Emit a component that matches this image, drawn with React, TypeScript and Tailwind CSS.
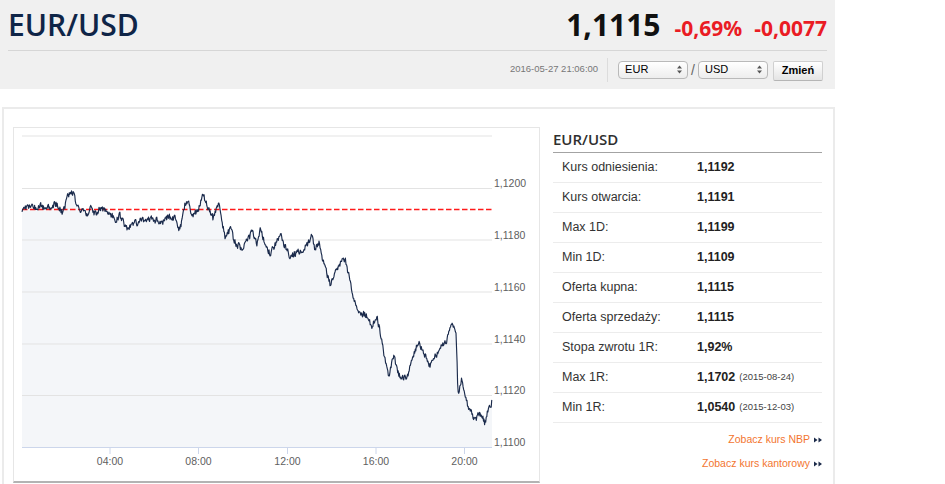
import * as React from "react";

type Pt = [number, number];

// rough shape of the intraday move, page coordinates
const controls: Pt[] = [
  [22, 208], [27, 205], [33, 207], [40, 204], [45, 208], [50, 206], [57, 203], [62, 211],
  [65, 207], [67, 191], [70, 193], [73, 190], [78, 207], [83, 210], [87, 214], [90, 206],
  [95, 212], [100, 208], [105, 208], [110, 212], [115, 219], [120, 215], [127, 227], [133, 224],
  [140, 220], [147, 220], [153, 218], [162, 222], [168, 215], [175, 218], [180, 229], [185, 203],
  [188, 201], [193, 215], [198, 209], [203, 194], [208, 206], [213, 217], [219, 204], [222, 219],
  [225, 238], [230, 228], [235, 241], [243, 249], [252, 231], [257, 242], [260, 229], [270, 254],
  [280, 234], [290, 255], [297, 251], [303, 250], [312, 235], [315, 249], [319, 240], [323, 261],
  [330, 282], [337, 266], [345, 258], [348, 270], [352, 290], [357, 306], [362, 312], [367, 314],
  [372, 326], [377, 314], [380, 332], [384, 352], [389, 376], [393, 354], [400, 376], [407, 378],
  [410, 363], [418, 342], [423, 348], [430, 366], [438, 350], [447, 338], [452, 324], [456, 331],
  [458, 392], [462, 377], [467, 402], [470, 407], [475, 419], [480, 413], [485, 422], [488, 410],
  [492, 401],
];

const interp = (x: number) => {
  for (let i = 1; i < controls.length; i++) {
    const [x0, y0] = controls[i - 1];
    const [x1, y1] = controls[i];
    if (x <= x1) return y0 + ((x - x0) / (x1 - x0)) * (y1 - y0);
  }
  return controls[controls.length - 1][1];
};

const buildSeries = () => {
  let seed = 1234567;
  const rnd = () => {
    seed = (seed * 1103515245 + 12345) % 2147483648;
    return seed / 2147483648;
  };
  const pts: Pt[] = [];
  let n = 0;
  for (let x = 22; x <= 492; x += 0.55) {
    n = 0.3 * n + (rnd() - 0.5) * 6.5;
    pts.push([x, Math.min(445, interp(x) + n)]);
  }
  pts.push([492, 399]);
  return pts;
};

const series = buildSeries();
const linePath = series.map(([x, y], i) => `${i ? "L" : "M"}${x.toFixed(1)},${y.toFixed(1)}`).join(" ");
const areaPath = `M22,446 ${series.map(([x, y]) => `L${x.toFixed(1)},${y.toFixed(1)}`).join(" ")} L492,446 Z`;

const gridLines = [
  { y: 135, label: "" },
  { y: 187.5, label: "1,1200" },
  { y: 239, label: "1,1180" },
  { y: 291, label: "1,1160" },
  { y: 343, label: "1,1140" },
  { y: 394.5, label: "1,1120" },
  { y: 446, label: "1,1100" },
];

const hours = [
  { x: 110, label: "04:00" },
  { x: 198.5, label: "08:00" },
  { x: 287.5, label: "12:00" },
  { x: 376, label: "16:00" },
  { x: 464.5, label: "20:00" },
];

const rows = [
  { label: "Kurs odniesienia:", value: "1,1192" },
  { label: "Kurs otwarcia:", value: "1,1191" },
  { label: "Max 1D:", value: "1,1199" },
  { label: "Min 1D:", value: "1,1109" },
  { label: "Oferta kupna:", value: "1,1115" },
  { label: "Oferta sprzedaży:", value: "1,1115" },
  { label: "Stopa zwrotu 1R:", value: "1,92%" },
  { label: "Max 1R:", value: "1,1702", date: "(2015-08-24)" },
  { label: "Min 1R:", value: "1,0540", date: "(2015-12-03)" },
];

const SelectBox = ({ value }: { value: string }) => (
  <div className="w-[70px] h-[18px] rounded-[4px] border border-[#b9b9b9] bg-linear-to-b from-white to-[#ededed] flex items-center justify-between pl-[6px] pr-[5px] text-[11px] text-black leading-none">
    <span>{value}</span>
    <svg width="5" height="9" viewBox="0 0 5 9">
      <polygon points="0,3.5 2.5,0.5 5,3.5" fill="#555" />
      <polygon points="0,5.5 2.5,8.5 5,5.5" fill="#555" />
    </svg>
  </div>
);

const DoubleArrow = () => (
  <svg width="8" height="6" viewBox="0 0 8 6">
    <polygon points="0,0.5 3.5,3 0,5.5" fill="#1c2b4a" />
    <polygon points="4.5,0.5 8,3 4.5,5.5" fill="#1c2b4a" />
  </svg>
);

const Chart = () => (
  <svg width="525" height="353" viewBox="14 127 525 353" className="block">
    <path d={areaPath} fill="#f4f6f9" />
    {gridLines.slice(0, 6).map((g) => (
      <line key={g.y} x1="22" x2="492" y1={g.y} y2={g.y} stroke="#e3e3e3" strokeWidth="1" />
    ))}
    <line x1="22" x2="492" y1="446.5" y2="446.5" stroke="#ccd6eb" strokeWidth="1" />
    {hours.map((h) => (
      <g key={h.label}>
        <line x1={h.x} x2={h.x} y1="446" y2="453" stroke="#ccd6eb" strokeWidth="1" />
        <text x={h.x} y="463.5" textAnchor="middle" fontFamily="'Liberation Sans', Arial, sans-serif" fontSize="10.5" fill="#606060">
          {h.label}
        </text>
      </g>
    ))}
    {gridLines
      .filter((g) => g.label)
      .map((g) => (
        <text key={g.label} x="494" y={g.y - 1.5} fontFamily="'Liberation Sans', Arial, sans-serif" fontSize="10.5" fill="#606060">
          {g.label}
        </text>
      ))}
    <line x1="22" x2="492" y1="208.5" y2="208.5" stroke="#ff1a1a" strokeWidth="1.3" strokeDasharray="5.5 2.5" />
    <path d={linePath} fill="none" stroke="#1b2b4c" strokeWidth="1.15" strokeLinejoin="round" />
  </svg>
);

export default function App() {
  return (
    <div className="w-[945px] h-[484px] overflow-hidden bg-white font-['Liberation_Sans',Arial,sans-serif] text-[#333]">
      <div className="w-[835px] h-[89px] bg-[#f0f0f0] px-2">
        <div className="h-[51px] flex items-center justify-between border-b border-[#d6d6d6]">
          <h1 className="font-['Open_Sans',sans-serif] font-semibold text-[30px] leading-none text-[#0f2547]">EUR/USD</h1>
          <div className="flex items-baseline font-['Open_Sans',sans-serif] leading-none">
            <span className="font-bold text-[30px] text-[#111]">1,1115</span>
            <span className="ml-[14px] font-bold text-[21px] text-[#ea1c24]">-0,69%</span>
            <span className="ml-[12px] font-bold text-[21px] text-[#ea1c24]">-0,0077</span>
          </div>
        </div>
        <div className="h-[37px] flex items-center justify-end pr-[4px]">
          <span className="text-[9.5px] text-[#777]">2016-05-27 21:06:00</span>
          <div className="ml-[9px] mr-[10px] w-px h-[24px] bg-[#dcdcdc]" />
          <SelectBox value="EUR" />
          <span className="mx-[3px] text-[14px] leading-none text-[#666]">/</span>
          <SelectBox value="USD" />
          <button className="ml-[5px] w-[50px] h-[20px] mt-[2px] rounded-[2px] border border-[#d0d0d0] border-b-[#b5b5b5] bg-linear-to-b from-white to-[#e4e4e4] text-[11px] font-bold text-black leading-none">
            Zmień
          </button>
        </div>
      </div>

      <div className="ml-[2px] mt-[18px] w-[833px] h-[400px] border-2 border-[#ebebeb] flex items-start pl-[9px] pt-[18px]">
        <div className="w-[527px] h-[356px] border border-[#e6e6e6] border-b-2 border-b-[#b3b3b3] bg-white">
          <Chart />
        </div>

        <div className="ml-[13px] w-[269px] flex flex-col">
          <div className="h-[26px] flex items-center border-b border-[#a3a3a3] font-['Open_Sans',sans-serif] font-semibold text-[15px] text-[#2f2f2f]">
            EUR/USD
          </div>
          {rows.map((r) => (
            <div key={r.label} className="h-[30px] flex items-center border-b border-[#ececec] pl-[9px] text-[12.5px]">
              <span className="w-[135px] text-[#333]">{r.label}</span>
              <span className="font-bold text-[#222]">{r.value}</span>
              {r.date ? <span className="ml-[4px] text-[9.5px] text-[#444]">{r.date}</span> : null}
            </div>
          ))}
          <div className="mt-[5px] flex flex-col items-end text-[10.5px] text-[#f3752f]">
            <div className="h-[24px] flex items-center gap-[4px]">
              <span>Zobacz kurs NBP</span>
              <DoubleArrow />
            </div>
            <div className="h-[24px] flex items-center gap-[4px]">
              <span>Zobacz kurs kantorowy</span>
              <DoubleArrow />
            </div>
          </div>
        </div>
      </div>
    </div>
  );
}
